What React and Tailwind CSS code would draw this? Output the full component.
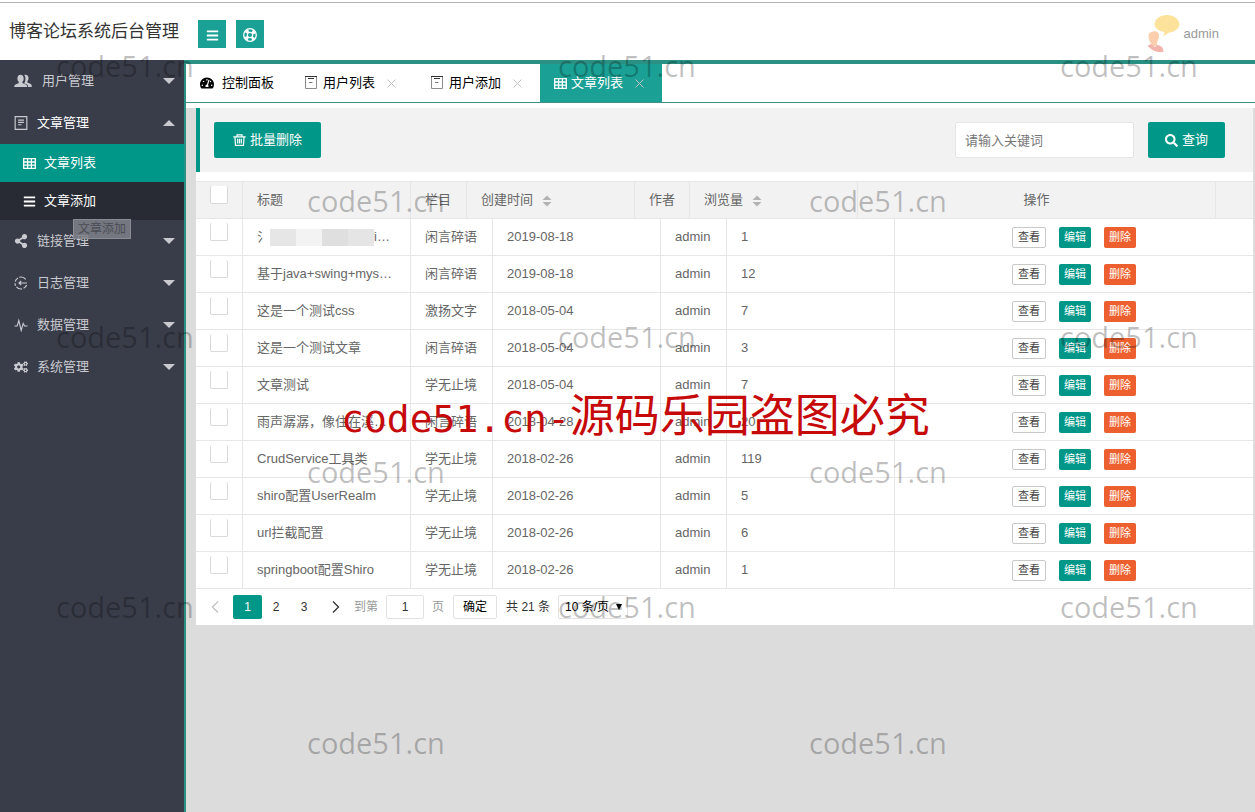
import React, { useState } from 'react';
import { FaBars, FaCogs, FaSearch, FaShareAlt, FaTachometerAlt } from 'react-icons/fa';

const UsersIcon = ({ className }) => (
  <svg viewBox="0 0 18 14" className={className} fill="currentColor" aria-hidden="true">
    <path d="M11.500.700c2 0 3 1.500 3 3.500 0 1.300-.5 2.500-1.200 3.200v1.200l3 1.200c1 .4 1.500 1.300 1.500 3.200h-3.600c-.1-1.700-1-2.300-2-2.700L10 9.200c1-1 1.400-2.500 1.400-4.500 0-1.500-.400-2.800-1.100-3.700.3-.2.800-.3 1.200-.3z" />
    <path d="M6.500.700c2 0 3.200 1.500 3.200 3.700 0 1.500-.5 2.700-1.300 3.400v1.300l3.300 1.300c1 .5 1.500 1.100 1.500 2.600H.200c0-1.500.4-2.100 1.400-2.600l3.200-1.300V7.800C4 7.100 3.400 5.900 3.400 4.400 3.400 2.200 4.500.700 6.500.700z" />
  </svg>
);

const LifeRingIcon = ({ className }) => (
  <svg viewBox="0 0 14 14" className={className} fill="none" stroke="currentColor" aria-hidden="true">
    <circle cx="7" cy="7" r="6.300" strokeWidth="1.300" />
    <circle cx="7" cy="7" r="2.700" strokeWidth="1.200" />
    <circle cx="7" cy="7" r="4.500" strokeWidth="3" strokeDasharray="3.530 3.540" strokeDashoffset="1.770" transform="rotate(45 7 7)" />
  </svg>
);

const FormIcon = ({ className }) => (
  <svg viewBox="0 0 12 12" className={className} fill="none" stroke="currentColor" aria-hidden="true">
    <path d="M1 .5h10v11H1zM3.500 3.500h5M3.500 5.500h5M3.500 7.500h3" />
  </svg>
);

const GridIcon = ({ className }) => (
  <svg viewBox="0 0 13 11" className={className} fill="none" stroke="currentColor" strokeWidth="1.3" aria-hidden="true">
    <path d="M.7.7h11.600v9.600H.7zM.7 4h11.600M.7 7.200h11.600M4.600.7v9.600M8.400.7v9.600" />
  </svg>
);

const LogIcon = ({ className }) => (
  <svg viewBox="0 0 14 14" className={className} fill="none" stroke="currentColor" strokeWidth="1.2" aria-hidden="true">
    <path d="M1.200 5.500A6 6 0 0 1 4 1.900M5.300 1.300a6 6 0 0 1 6.400 2M12.600 9a6 6 0 0 1-3 3.300M8 12.900a6 6 0 0 1-5.500-2M1.600 9.800a6 6 0 0 1-.6-2.500" />
    <path d="M5 7h8M7.200 5 5 7l2.200 2" />
  </svg>
);

const PulseIcon = ({ className }) => (
  <svg viewBox="0 0 14 14" className={className} fill="none" stroke="currentColor" strokeWidth="1.100" aria-hidden="true">
    <path d="M.5 8h2.700l1.600-5.500 2.400 10 2-7L10.600 8h2.900" />
  </svg>
);

const ClipboardIcon = ({ className }) => (
  <svg viewBox="0 0 12 13" className={className} fill="none" aria-hidden="true">
    <path d="M.5.500h11v12H.5z" stroke="#8c8c8c" />
    <path d="M0 .5h12M3 2.500h6" stroke="#333" />
    <path d="M4 6.500h3.500" stroke="#777" />
  </svg>
);

const TrashIcon = ({ className }) => (
  <svg viewBox="0 0 13 12" className={className} fill="none" stroke="currentColor" strokeWidth="1.200" aria-hidden="true">
    <path d="M.3 2.800h12.400M4 2.500V.800h5v1.700M2 3.200l.5 8.100h8l.5-8.100M4.700 4.800v4.800M6.500 4.800v4.800M8.300 4.800v4.800" />
  </svg>
);

const Avatar = () => (
  <svg viewBox="0 0 34 40" className="h-10 w-[34px]" aria-hidden="true">
    <path d="M20 1c7 0 12 4 12.500 9.500C32 15 27 18 22 18.500c-2 2-4 3-6.500 3.200 1.500-1 2-2.200 2-3.700C11 17 8 14 7.500 10 8 5 13 1 20 1z" fill="#fde29c" />
    <path d="M6 17.500c3-.8 6 .5 6 4 0 3-.8 5-2 6.500v4l-6.500.5v-4C2 26.500 1.500 24 1.500 22c0-2.500 1.500-4 4.500-4.500z" fill="#fbcfae" />
    <path d="M.5 31.500c2-1 3.500-1 4.500-1 2 3 4 3 5.500.3 3.500 1 6 2.500 6 7-5 1.500-12-1-16-6.300z" fill="#f3b3ad" />
  </svg>
);

const Caret = ({ up }) => (
  <svg viewBox="0 0 12 6" className="ml-auto h-[6px] w-3" fill="currentColor" aria-hidden="true">
    <path d={up ? 'M0 6 6 0l6 6z' : 'M0 0h12L6 6z'} />
  </svg>
);

const SortIcon = () => (
  <svg viewBox="0 0 10 12" className="ml-[9px] inline-block h-3 w-[10px]" fill="#b2b2b2" aria-hidden="true">
    <path d="M.5 5 5 .5 9.500 5zM.5 7h9L5 11.500z" />
  </svg>
);

const menu = [
  { label: '用户管理', Icon: UsersIcon, wide: true },
  {
    label: '文章管理',
    Icon: FormIcon,
    open: true,
    children: [
      { label: '文章列表', Icon: GridIcon, active: true },
      { label: '文章添加', Icon: FaBars },
    ],
  },
  { label: '链接管理', Icon: FaShareAlt },
  { label: '日志管理', Icon: LogIcon },
  { label: '数据管理', Icon: PulseIcon },
  { label: '系统管理', Icon: FaCogs },
];

const articles = [
  { masked: true, column: '闲言碎语', date: '2019-08-18', views: 1 },
  { title: '基于java+swing+mys…', column: '闲言碎语', date: '2019-08-18', views: 12 },
  { title: '这是一个测试css', column: '激扬文字', date: '2018-05-04', views: 7 },
  { title: '这是一个测试文章', column: '闲言碎语', date: '2018-05-04', views: 3 },
  { title: '文章测试', column: '学无止境', date: '2018-05-04', views: 7 },
  { title: '雨声潺潺，像住在溪…', column: '闲言碎语', date: '2018-04-28', views: 20 },
  { title: 'CrudService工具类', column: '学无止境', date: '2018-02-26', views: 119 },
  { title: 'shiro配置UserRealm', column: '学无止境', date: '2018-02-26', views: 5 },
  { title: 'url拦截配置', column: '学无止境', date: '2018-02-26', views: 6 },
  { title: 'springboot配置Shiro', column: '学无止境', date: '2018-02-26', views: 1 },
];

function Header() {
  return (
    <header className="mt-[2px] flex h-[58px] items-center border-t border-[#b4b4b4] bg-white pr-9 pl-[9px]">
      <h1 className="text-[17px] text-[#333]">博客论坛系统后台管理</h1>
      <div className="mt-1 ml-[19px] flex gap-[10px] text-white">
        <button aria-label="菜单" className="flex size-7 items-center justify-center bg-[#1aa094]">
          <FaBars className="mt-[3px] size-[13px]" />
        </button>
        <button aria-label="帮助" className="flex size-7 items-center justify-center bg-[#1aa094]">
          <LifeRingIcon className="mt-[3px] size-[14px]" />
        </button>
      </div>
      <a href="#user" className="ml-auto flex items-center pt-1 text-[13px] text-[#999]">
        <Avatar />
        <span className="ml-[3px]">admin</span>
      </a>
    </header>
  );
}

function Sidebar() {
  return (
    <nav className="relative w-[186px] shrink-0 border-r-2 border-[#2a9083] bg-[#393d49] text-[13px] text-[#c9cacf]">
      <ul>
        {menu.map(({ label, Icon, wide, open, children }) => (
          <li key={label}>
            <a href="#menu" className="flex h-[42px] items-center pr-[9px] pl-[14px]">
              <Icon className={wide ? 'mr-[10px] h-[14px] w-[18px]' : 'mr-[9px] size-[14px]'} />
              <span className={open ? 'text-white' : ''}>{label}</span>
              <Caret up={open} />
            </a>
            {children && (
              <ul className="bg-[#282b33] text-white">
                {children.map((item) => (
                  <li key={item.label}>
                    <a href="#menu" className={`flex h-[38px] items-center gap-2 pl-[23px] ${item.active ? 'bg-[#009688]' : ''}`}>
                      <item.Icon className="size-[13px]" />
                      {item.label}
                    </a>
                  </li>
                ))}
              </ul>
            )}
          </li>
        ))}
      </ul>
      <div role="tooltip" className="absolute top-[159px] left-[73px] h-5 border border-[#8a8c93] bg-[#7f8188]/85 px-1 text-xs leading-[18px] text-[#4b4d55]">
        文章添加
      </div>
    </nav>
  );
}

function CloseTab() {
  return (
    <button aria-label="关闭" className="ml-3 text-[#c2c2c2]">
      <svg viewBox="0 0 9 9" className="size-[9px]" stroke="currentColor" aria-hidden="true">
        <path d="m.5.5 8 8M8.500.5l-8 8" />
      </svg>
    </button>
  );
}

function Tabs() {
  return (
    <div className="flex h-[39px] border-b border-[#3f9187] bg-white text-[13px] text-black">
      <div className="flex items-center px-[14px]">
        <FaTachometerAlt className="mr-2 size-[14px]" />
        <a href="#home">控制面板</a>
      </div>
      <div className="flex items-center pr-[18px] pl-[17px]">
        <ClipboardIcon className="mr-[6px] mb-[2px] h-[13px] w-3" />
        <a href="#users">用户列表</a>
        <CloseTab />
      </div>
      <div className="flex items-center pr-[18px] pl-[17px]">
        <ClipboardIcon className="mr-[6px] mb-[2px] h-[13px] w-3" />
        <a href="#add">用户添加</a>
        <CloseTab />
      </div>
      <div className="flex items-center bg-[#1aa094] pr-[18px] pl-[14px] text-white">
        <GridIcon className="mr-1 h-[11px] w-[13px]" />
        <a href="#list">文章列表</a>
        <CloseTab />
      </div>
    </div>
  );
}

function Toolbar() {
  return (
    <div className="flex items-center border-l-4 border-[#009688] bg-[#f2f2f2] py-[14px] pr-7 pl-[14px] text-[13px]">
      <button className="flex h-9 items-center gap-1 rounded-xs bg-[#009688] px-[19px] text-white">
        <TrashIcon className="h-3 w-[13px]" />
        批量删除
      </button>
      <input
        type="text"
        aria-label="关键词"
        placeholder="请输入关键词"
        className="ml-auto h-9 w-[179px] rounded-xs border border-[#e6e6e6] bg-white px-[9px] placeholder:text-[#777]"
      />
      <button className="ml-[14px] flex h-9 items-center gap-1 rounded-xs bg-[#009688] px-[17px] text-white">
        <FaSearch className="size-[13px]" />
        查询
      </button>
    </div>
  );
}

function Check({ label }) {
  return (
    <input
      type="checkbox"
      aria-label={label}
      className="mx-auto mt-1 block size-[18px] appearance-none rounded-xs border border-t-0 border-[#d9d9d9] bg-white"
    />
  );
}

// Title whose middle part is pixelated
function MaskedTitle() {
  return (
    <div className="flex items-center">
      <span>氵</span>
      <span className="flex h-[17px]">
        <i className="w-[26px] bg-[#e6e6e6]" />
        <i className="w-[26px] bg-[#f3f3f3]" />
        <i className="w-[26px] bg-[#dfdfdf]" />
        <i className="w-[26px] bg-[#e5e5e5]" />
      </span>
      <span>i…</span>
    </div>
  );
}

function ArticleTable() {
  const th = 'border-r border-[#e6e6e6] px-[14px] text-left font-normal whitespace-nowrap';
  const td = 'border-r border-b border-[#e6e6e6] px-[14px] whitespace-nowrap';

  return (
    <div className="text-[13px] text-[#666]">
      <table className="w-full table-fixed border-separate border-spacing-0 border-t border-b border-[#e6e6e6] bg-[#f2f2f2]">
        <colgroup>
          <col className="w-[47px]" />
          <col className="w-[168px]" />
          <col className="w-[56px]" />
          <col className="w-[168px]" />
          <col className="w-[55px]" />
          <col className="w-[168px]" />
          <col />
          <col className="w-[37px]" />
        </colgroup>
        <thead>
          <tr className="h-9">
            <th className="border-r border-[#e6e6e6] p-0 align-top"><Check label="全选" /></th>
            <th className={th}>标题</th>
            <th className={th}>栏目</th>
            <th className={th}>创建时间<SortIcon /></th>
            <th className={th}>作者</th>
            <th className={th}>浏览量<SortIcon /></th>
            <th className="border-r border-[#e6e6e6] font-normal">操作</th>
            <th />
          </tr>
        </thead>
      </table>
      <table className="w-full table-fixed border-separate border-spacing-0">
        <colgroup>
          <col className="w-[47px]" />
          <col className="w-[168px]" />
          <col className="w-[82px]" />
          <col className="w-[168px]" />
          <col className="w-[66px]" />
          <col className="w-[168px]" />
          <col />
        </colgroup>
        <tbody>
          {articles.map((row, i) => (
            <tr key={i} className="h-[37px]">
              <td className="border-r border-b border-[#e6e6e6] p-0 align-top"><Check label={`选择第${i + 1}行`} /></td>
              <td className={td}>{row.masked ? <MaskedTitle /> : row.title}</td>
              <td className={td}>{row.column}</td>
              <td className={td}>{row.date}</td>
              <td className={td}>admin</td>
              <td className={td}>{row.views}</td>
              <td className="border-b border-[#e6e6e6] p-0">
                <div className="flex items-center justify-center gap-[13px] text-[11px]">
                  <button className="h-[21px] rounded-xs border border-[#c9c9c9] bg-white px-[5px] text-[#444]">查看</button>
                  <button className="h-[21px] rounded-xs bg-[#009688] px-[5px] text-white">编辑</button>
                  <button className="h-[21px] rounded-xs bg-[#ed5f2e] px-[5px] text-white">删除</button>
                </div>
              </td>
            </tr>
          ))}
        </tbody>
      </table>
    </div>
  );
}

function Pagination() {
  const [page, setPage] = useState(1);

  return (
    <div className="flex h-9 items-center pl-[15px] text-xs text-[#333]">
      <button aria-label="上一页" className="text-[#c2c2c2]">
        <svg viewBox="0 0 8 12" className="h-3 w-2" fill="none" stroke="currentColor" strokeWidth="1.300"><path d="M7 .5 1.500 6 7 11.500" /></svg>
      </button>
      <div className="ml-[14px] flex">
        {[1, 2, 3].map((n) => (
          <button
            key={n}
            onClick={() => setPage(n)}
            className={`h-6 rounded-xs ${n === page ? 'w-[29px] bg-[#009688] text-white' : 'w-7'}`}
          >
            {n}
          </button>
        ))}
      </div>
      <button aria-label="下一页" className="ml-[14px]">
        <svg viewBox="0 0 8 12" className="h-3 w-2" fill="none" stroke="currentColor" strokeWidth="1.300"><path d="M1 .5 6.500 6 1 11.500" /></svg>
      </button>
      <label htmlFor="page" className="ml-[14px] text-[#999]">到第</label>
      <input id="page" type="text" defaultValue="1" className="mx-2 h-6 w-[38px] rounded-xs border border-[#e2e2e2] text-center" />
      <span className="text-[#999]">页</span>
      <button className="mx-[9px] h-6 rounded-xs border border-[#e2e2e2] px-[9px] text-black">确定</button>
      <span>共 21 条</span>
      <div className="relative ml-2">
        <select aria-label="每页条数" className="h-6 w-[70px] appearance-none rounded-xs border border-[#e2e2e2] pl-[6px] text-black">
          <option>10 条/页</option>
          <option>20 条/页</option>
        </select>
        <svg viewBox="0 0 6 6" className="pointer-events-none absolute top-[9px] right-[6px] size-[6px]"><path d="M0 0h6L3 6z" /></svg>
      </div>
    </div>
  );
}

const marks = [
  [56, 66], [558, 66], [1060, 66],
  [307, 201], [809, 201],
  [56, 337], [558, 337], [1060, 337],
  [307, 472], [809, 472],
  [56, 607], [558, 607], [1060, 607],
  [307, 743], [809, 743],
];

function Watermarks() {
  return (
    <div className="pointer-events-none absolute inset-0 overflow-hidden">
      {marks.map(([x, y]) => (
        <span
          key={`${x}-${y}`}
          className="absolute font-['Open_Sans',sans-serif] text-[29px] leading-10 text-black/25"
          style={{ left: x, top: y - 20 }}
        >
          code51.cn
        </span>
      ))}
      <p className="absolute top-[387px] left-[341px] text-[45px] leading-[60px] whitespace-nowrap text-[#c60a0a]">
        <span className="font-['DejaVu_Sans_Mono','Noto_Sans_CJK_SC',monospace] text-[38px]">code51.cn-</span>
        源码乐园盗图必究
      </p>
    </div>
  );
}

export default function App() {
  return (
    <div className="relative flex min-h-screen flex-col bg-white font-['Liberation_Sans','Noto_Sans_CJK_SC',sans-serif]">
      <Header />
      <div className="flex grow">
        <Sidebar />
        <main className="flex min-w-0 grow flex-col border-t-4 border-[#2a9083]">
          <Tabs />
          <div className="mt-[5px] grow bg-[#dcdcdc] pr-[2px] pl-[10px]">
            <div className="bg-white">
              <Toolbar />
              <div className="pt-[9px]">
                <ArticleTable />
                <Pagination />
              </div>
            </div>
          </div>
        </main>
      </div>
      <Watermarks />
    </div>
  );
}
